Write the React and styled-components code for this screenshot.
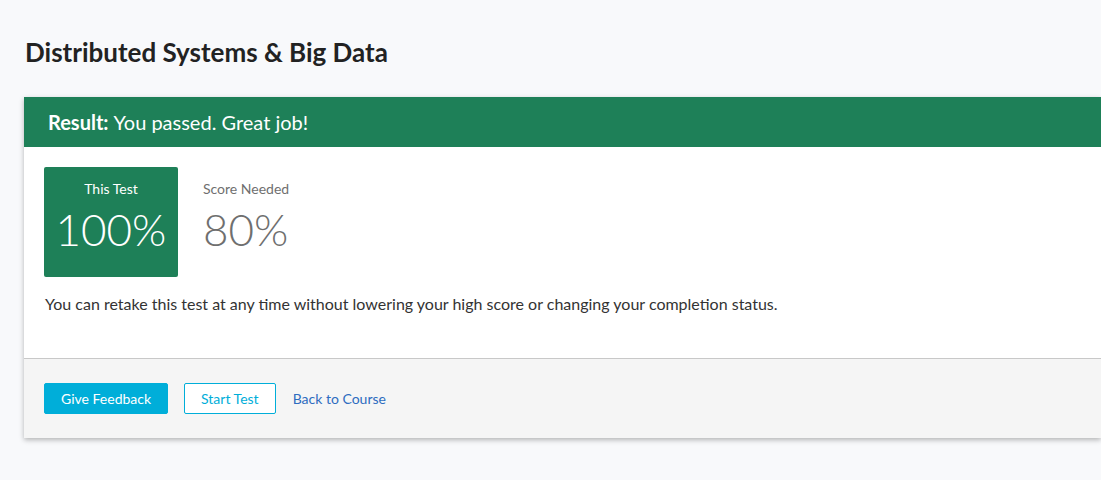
import React from 'react';
import styled, { createGlobalStyle } from 'styled-components';

const GlobalStyle = createGlobalStyle`
  html, body {
    margin: 0;
    padding: 0;
    background: #f8f9fb;
    font-family: Lato, "Open Sans", sans-serif;
    color: #333;
    overflow: hidden;
  }
`;

function App() {
  return (
    <>
      <GlobalStyle />
      <Page>
        <Title>Distributed Systems &amp; Big Data</Title>
        <Card>
          <ResultBar>
            <strong>Result:</strong> You passed. Great job!
          </ResultBar>
          <CardBody>
            <Scores>
              <ScoreBox $highlight>
                <ScoreLabel>This Test</ScoreLabel>
                <ScoreValue>100%</ScoreValue>
              </ScoreBox>
              <ScoreBox>
                <ScoreLabel>Score Needed</ScoreLabel>
                <ScoreValue>80%</ScoreValue>
              </ScoreBox>
            </Scores>
            <Note>
              You can retake this test at any time without lowering your high score or changing your completion status.
            </Note>
          </CardBody>
          <Footer>
            <Button $primary>Give Feedback</Button>
            <Button>Start Test</Button>
            <LinkText href="#">Back to Course</LinkText>
          </Footer>
        </Card>
      </Page>
    </>
  );
}

export default App;

const Page = styled.div`
  padding: 36px 0 0 24px;
  overflow: hidden;
  height: 480px;
  box-sizing: border-box;
`;

const Title = styled.h1`
  margin: 0 0 29px 1px;
  font-size: 26px;
  line-height: 32px;
  font-weight: 700;
  color: #222;
`;

const Card = styled.div`
  background: #fff;
  box-shadow: 0 2px 5px rgba(0, 0, 0, 0.28);
`;

const ResultBar = styled.div`
  height: 50px;
  display: flex;
  align-items: center;
  gap: 5px;
  padding-left: 24px;
  background: #1e8058;
  color: #fff;
  font-size: 20px;
  strong {
    font-weight: 700;
  }
`;

const CardBody = styled.div`
  padding: 20px 20px 0;
  height: 191px;
  border-bottom: 1px solid #c8c8c8;
`;

const Scores = styled.div`
  display: flex;
`;

const ScoreBox = styled.div`
  width: ${p => (p.$highlight ? '134px' : 'auto')};
  height: 110px;
  box-sizing: border-box;
  display: flex;
  flex-direction: column;
  align-items: ${p => (p.$highlight ? 'center' : 'flex-start')};
  padding: 13px ${p => (p.$highlight ? '0' : '25px')} 0;
  border-radius: 2px;
  background: ${p => (p.$highlight ? '#1e8058' : 'transparent')};
  color: ${p => (p.$highlight ? '#fff' : '#6f6f6f')};
`;

const ScoreLabel = styled.div`
  font-size: 14px;
  line-height: 18px;
`;

const ScoreValue = styled.div`
  margin-top: 6px;
  font-size: 44px;
  line-height: 50px;
  font-weight: 300;
`;

const Note = styled.p`
  margin: 17px 0 0 1px;
  font-size: 16px;
  line-height: 20px;
  color: #333;
`;

const Footer = styled.div`
  height: 79px;
  display: flex;
  align-items: center;
  gap: 16px;
  padding: 0 20px;
  background: #f5f5f5;
`;

const Button = styled.button`
  height: 31px;
  padding: 0 16px;
  border-radius: 2px;
  border: 1px solid #00aed9;
  background: ${p => (p.$primary ? '#00aed9' : '#fff')};
  color: ${p => (p.$primary ? '#fff' : '#00aed9')};
  font-family: Lato, "Open Sans", sans-serif;
  font-size: 14px;
  cursor: pointer;
`;

const LinkText = styled.a`
  margin-left: 1px;
  font-size: 14px;
  color: #2d6cc0;
  text-decoration: none;
`;
